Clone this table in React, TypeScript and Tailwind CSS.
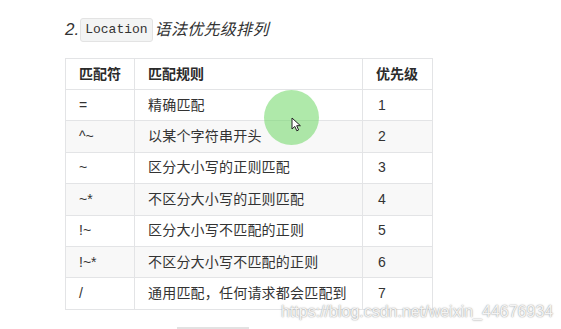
const rows = [
  { op: "=", rule: "精确匹配", level: "1" },
  { op: "^~", rule: "以某个字符串开头", level: "2" },
  { op: "~", rule: "区分大小写的正则匹配", level: "3" },
  { op: "~*", rule: "不区分大小写的正则匹配", level: "4" },
  { op: "!~", rule: "区分大小写不匹配的正则", level: "5" },
  { op: "!~*", rule: "不区分大小写不匹配的正则", level: "6" },
  { op: "/", rule: "通用匹配，任何请求都会匹配到", level: "7" },
];

const font = "font-['Liberation_Sans','Noto_Sans_CJK_SC',sans-serif]";

export default function App() {
  return (
    <div
      className={`relative w-[561px] h-[329px] overflow-hidden bg-white ${font}`}
    >
      <div className="pl-[65px] pt-[18px]">
        {/* heading */}
        <p className="flex items-center h-[24px] text-[16px] italic text-[#333]">
          <span className="mr-[1px] text-[17px]">2.</span>
          <code className="not-italic font-['Liberation_Mono',monospace] text-[13px] text-[#333] bg-[#f3f4f4] border border-[#e3e3e3] rounded-[3px] px-[4px] h-[24px] leading-[22px]">
            Location
          </code>
          <span className="ml-[2px] tracking-[0.3px]">语法优先级排列</span>
        </p>

        {/* table */}
        <table className="mt-[16px] border-collapse text-[14px] text-[#333]">
          <thead>
            <tr className="bg-white">
              <th className="w-[69px] h-[31px] border border-[#e3e4e6] pl-[13px] text-left font-bold text-[#2b2b2b]">
                匹配符
              </th>
              <th className="w-[228px] h-[31px] border border-[#e3e4e6] pl-[13px] text-left font-bold text-[#2b2b2b]">
                匹配规则
              </th>
              <th className="w-[70px] h-[31px] border border-[#e3e4e6] pl-[13px] text-left font-bold text-[#2b2b2b]">
                优先级
              </th>
            </tr>
          </thead>
          <tbody>
            {rows.map((r, i) => (
              <tr key={r.op} className={i % 2 === 1 ? "bg-[#f8f8f8]" : "bg-white"}>
                <td className="h-[31.4px] border border-[#e3e4e6] pl-[13px]">
                  {r.op}
                </td>
                <td className="h-[31.4px] border border-[#e3e4e6] pl-[13px] tracking-[0.2px]">
                  {r.rule}
                </td>
                <td className="h-[31.4px] border border-[#e3e4e6] pl-[15px]">
                  {r.level}
                </td>
              </tr>
            ))}
          </tbody>
        </table>

        {/* top of next element */}
        <div className="ml-[112px] mt-[17px] w-[72px] h-[2px] bg-[#e2e2e2]" />
      </div>

      {/* pointer highlight */}
      <div className="absolute left-[264px] top-[90px] w-[55px] h-[55px] rounded-full bg-[rgba(110,215,100,0.55)]" />
      <svg
        className="absolute left-[291px] top-[117px]"
        width="11"
        height="15"
        viewBox="0 0 11 15"
      >
        <path
          d="M1 1 L1 12 L3.8 9.4 L5.8 13.8 L7.6 13 L5.7 8.7 L9.4 8.7 Z"
          fill="#fff"
          stroke="#222"
          strokeWidth="1"
          strokeLinejoin="round"
        />
      </svg>

      {/* watermark */}
      <div className="absolute left-[281px] top-[300px] text-[16px] text-[#f4f4f4] font-['Liberation_Sans',sans-serif] [text-shadow:0_0_1.5px_#7a7a7a]">
        https://blog.csdn.net/weixin_44676934
      </div>
    </div>
  );
}
